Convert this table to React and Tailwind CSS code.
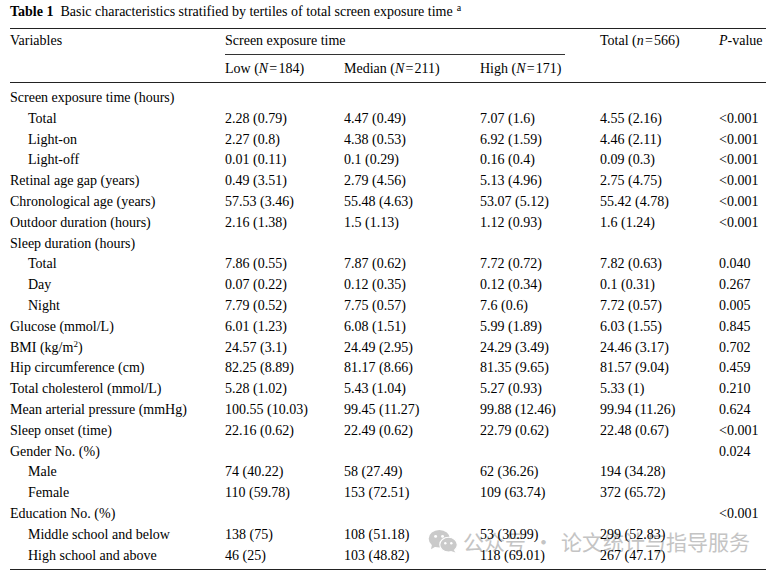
import React from "react";

const I = ({ children }) => <span className="italic">{children}</span>;

const rows = [
  { v: "Screen exposure time (hours)", sub: false, d: [] },
  { v: "Total", sub: true, d: ["2.28 (0.79)", "4.47 (0.49)", "7.07 (1.6)", "4.55 (2.16)", "<0.001"] },
  { v: "Light-on", sub: true, d: ["2.27 (0.8)", "4.38 (0.53)", "6.92 (1.59)", "4.46 (2.11)", "<0.001"] },
  { v: "Light-off", sub: true, d: ["0.01 (0.11)", "0.1 (0.29)", "0.16 (0.4)", "0.09 (0.3)", "<0.001"] },
  { v: "Retinal age gap (years)", d: ["0.49 (3.51)", "2.79 (4.56)", "5.13 (4.96)", "2.75 (4.75)", "<0.001"] },
  { v: "Chronological age (years)", d: ["57.53 (3.46)", "55.48 (4.63)", "53.07 (5.12)", "55.42 (4.78)", "<0.001"] },
  { v: "Outdoor duration (hours)", d: ["2.16 (1.38)", "1.5 (1.13)", "1.12 (0.93)", "1.6 (1.24)", "<0.001"] },
  { v: "Sleep duration (hours)", d: [] },
  { v: "Total", sub: true, d: ["7.86 (0.55)", "7.87 (0.62)", "7.72 (0.72)", "7.82 (0.63)", "0.040"] },
  { v: "Day", sub: true, d: ["0.07 (0.22)", "0.12 (0.35)", "0.12 (0.34)", "0.1 (0.31)", "0.267"] },
  { v: "Night", sub: true, d: ["7.79 (0.52)", "7.75 (0.57)", "7.6 (0.6)", "7.72 (0.57)", "0.005"] },
  { v: "Glucose (mmol/L)", d: ["6.01 (1.23)", "6.08 (1.51)", "5.99 (1.89)", "6.03 (1.55)", "0.845"] },
  { v: <>BMI (kg/m<sup className="text-[9px]">2</sup>)</>, d: ["24.57 (3.1)", "24.49 (2.95)", "24.29 (3.49)", "24.46 (3.17)", "0.702"] },
  { v: "Hip circumference (cm)", d: ["82.25 (8.89)", "81.17 (8.66)", "81.35 (9.65)", "81.57 (9.04)", "0.459"] },
  { v: "Total cholesterol (mmol/L)", d: ["5.28 (1.02)", "5.43 (1.04)", "5.27 (0.93)", "5.33 (1)", "0.210"] },
  { v: "Mean arterial pressure (mmHg)", d: ["100.55 (10.03)", "99.45 (11.27)", "99.88 (12.46)", "99.94 (11.26)", "0.624"] },
  { v: "Sleep onset (time)", d: ["22.16 (0.62)", "22.49 (0.62)", "22.79 (0.62)", "22.48 (0.67)", "<0.001"] },
  { v: "Gender No. (%)", d: ["", "", "", "", "0.024"] },
  { v: "Male", sub: true, d: ["74 (40.22)", "58 (27.49)", "62 (36.26)", "194 (34.28)", ""] },
  { v: "Female", sub: true, d: ["110 (59.78)", "153 (72.51)", "109 (63.74)", "372 (65.72)", ""] },
  { v: "Education No. (%)", d: ["", "", "", "", "<0.001"] },
  { v: "Middle school and below", sub: true, d: ["138 (75)", "108 (51.18)", "53 (30.99)", "299 (52.83)", ""] },
  { v: "High school and above", sub: true, d: ["46 (25)", "103 (48.82)", "118 (69.01)", "267 (47.17)", ""] },
];

const cols = "grid grid-cols-[215px_119px_136px_120px_119px_47px]";

function WeChat() {
  return (
    <svg width="30" height="24" viewBox="0 0 32 26">
      <ellipse cx="12" cy="10.5" rx="11.5" ry="9.5" fill="#cacaca" />
      <path d="M4 17 L3 22 L9 18.5 Z" fill="#cacaca" />
      <circle cx="8" cy="8" r="1.6" fill="#fff" />
      <circle cx="15.5" cy="8" r="1.6" fill="#fff" />
      <ellipse cx="22" cy="17" rx="9.5" ry="8" fill="#cacaca" stroke="#fff" strokeWidth="1.2" />
      <path d="M27 22 L29.5 25.5 L24 23.5 Z" fill="#cacaca" />
      <circle cx="18.5" cy="15.5" r="1.3" fill="#fff" />
      <circle cx="25" cy="15.5" r="1.3" fill="#fff" />
    </svg>
  );
}

export default function App() {
  return (
    <div
      className="relative w-[773px] h-[571px] overflow-hidden bg-white text-black"
      style={{ fontFamily: '"Liberation Serif", "Times New Roman", serif' }}
    >
      <div className="absolute left-[428px] top-[527px] flex items-center gap-[5px] pointer-events-none">
        <WeChat />
        <span
          className="text-[21px] leading-[28px] text-[#c4c4c4] whitespace-nowrap"
          style={{ fontFamily: '"Noto Sans CJK SC", sans-serif' }}
        >
          公众号<span className="mx-[7px]">·</span>论文统计与指导服务
        </span>
      </div>
      <div className="relative pl-[10px] pr-[7px]">
        <div className="h-[28px] text-[14px] leading-[24px] whitespace-nowrap">
          <span className="font-bold">Table 1</span>
          <span className="ml-[7px]">Basic characteristics stratified by tertiles of total screen exposure time</span>
          <sup className="text-[10px] ml-[4px]">a</sup>
        </div>
        <div className="border-t border-[#222] text-[14px]">
          <div className={`${cols} h-[26px] leading-[24px]`}>
            <div>Variables</div>
            <div className="col-span-3">
              <div className="w-[340px] h-[26px] border-b border-[#333]">Screen exposure time</div>
            </div>
            <div>
              Total (<I>n</I>{"\u200a=\u200a"}566)
            </div>
            <div>
              <I>P</I>-value
            </div>
          </div>
          <div className={`${cols} h-[28px] leading-[27px] border-b border-[#222]`}>
            <div></div>
            <div>
              Low (<I>N</I>{"\u200a=\u200a"}184)
            </div>
            <div>
              Median (<I>N</I>{"\u200a=\u200a"}211)
            </div>
            <div>
              High (<I>N</I>{"\u200a=\u200a"}171)
            </div>
            <div></div>
            <div></div>
          </div>
          <div className="pt-[5px] pb-[3px] border-b border-[#222]">
            {rows.map((r, i) => (
              <div key={i} className={`${cols} h-[20.8px] leading-[20.8px] whitespace-nowrap`}>
                <div className={r.sub ? "pl-[18px]" : ""}>{r.v}</div>
                {[0, 1, 2, 3, 4].map((j) => (
                  <div key={j}>{r.d[j] || ""}</div>
                ))}
              </div>
            ))}
          </div>
        </div>
      </div>
    </div>
  );
}
